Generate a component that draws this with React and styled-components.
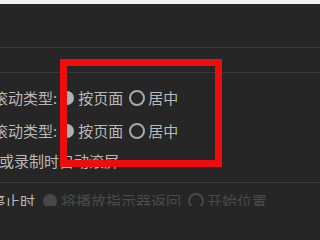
import React from 'react';
import styled, { createGlobalStyle } from 'styled-components';

const GlobalStyle = createGlobalStyle`
  html, body {
    margin: 0;
    padding: 0;
    background: #262626;
  }
  body {
    font-family: "Noto Sans CJK SC", "Noto Sans", sans-serif;
  }
`;

const Page = styled.div`
  position: relative;
  width: 100%;
  min-width: 275px;
  height: 206px;
  overflow: hidden;
  background: #262626;
`;

const TopStrip = styled.div`
  height: 4px;
  background: #f2f2f2;
`;

const Block = styled.div`
  height: ${(p) => p.$h}px;
  border-bottom: 1px solid #3a3a3a;
`;

const Section = styled.div`
  display: flex;
  flex-direction: column;
  padding-bottom: 10px;
  border-bottom: 1px solid #3a3a3a;
`;

const Row = styled.div`
  display: flex;
  align-items: center;
  height: 22px;
  margin-top: ${(p) => p.$top || 0}px;
  margin-left: ${(p) => p.$indent || 0}px;
  font-size: 15px;
  line-height: 22px;
  white-space: nowrap;
  color: #b9b9b9;
`;

const Label = styled.span`
  color: #b9b9b9;
  margin-right: ${(p) => p.$gap || 3}px;
`;

const Option = styled.span`
  display: inline-flex;
  align-items: center;
  margin-right: ${(p) => p.$gap || 6}px;
  color: ${(p) => (p.$muted ? '#4a4a4a' : '#b9b9b9')};
`;

const Radio = styled.span`
  box-sizing: border-box;
  display: inline-block;
  flex: none;
  border-radius: 50%;
  margin-right: ${(p) => (p.$checked ? 4 : 3)}px;
  width: ${(p) => (p.$checked ? 14 : 16)}px;
  height: ${(p) => (p.$checked ? 14 : 16)}px;
  background: ${(p) => (p.$checked ? (p.$muted ? '#484848' : '#b0b0b0') : 'transparent')};
  border: ${(p) => (p.$checked ? 'none' : `2.5px solid ${p.$muted ? '#484848' : '#a9a9a9'}`)};
`;

const Lower = styled.div`
  padding-top: 7px;
`;

const Highlight = styled.div`
  position: absolute;
  left: 60px;
  top: 59px;
  width: 162px;
  height: 108px;
  box-sizing: border-box;
  border: 7px solid #ee0d0d;
  pointer-events: none;
`;

const ScrollRow = ({ top }) => (
  <Row $top={top} $indent={-7}>
    <Label>滚动类型:</Label>
    <Option>
      <Radio $checked />
      按页面
    </Option>
    <Option>
      <Radio />
      居中
    </Option>
  </Row>
);

export default function App() {
  return (
    <Page>
      <GlobalStyle />
      <TopStrip />
      <Block $h={43} />
      <Block $h={24} />
      <Section>
        <ScrollRow top={14} />
        <ScrollRow top={11} />
        <Row $top={8} $indent={-1}>
          或录制时自动滚屏
        </Row>
      </Section>
      <Lower>
        <Row $indent={-10}>
          <Label $gap={8}>停止时</Label>
          <Option $gap={7} $muted>
            <Radio $checked $muted />
            将播放指示器返回
          </Option>
          <Option $muted>
            <Radio $muted />
            开始位置
          </Option>
        </Row>
      </Lower>
      <Highlight />
    </Page>
  );
}
